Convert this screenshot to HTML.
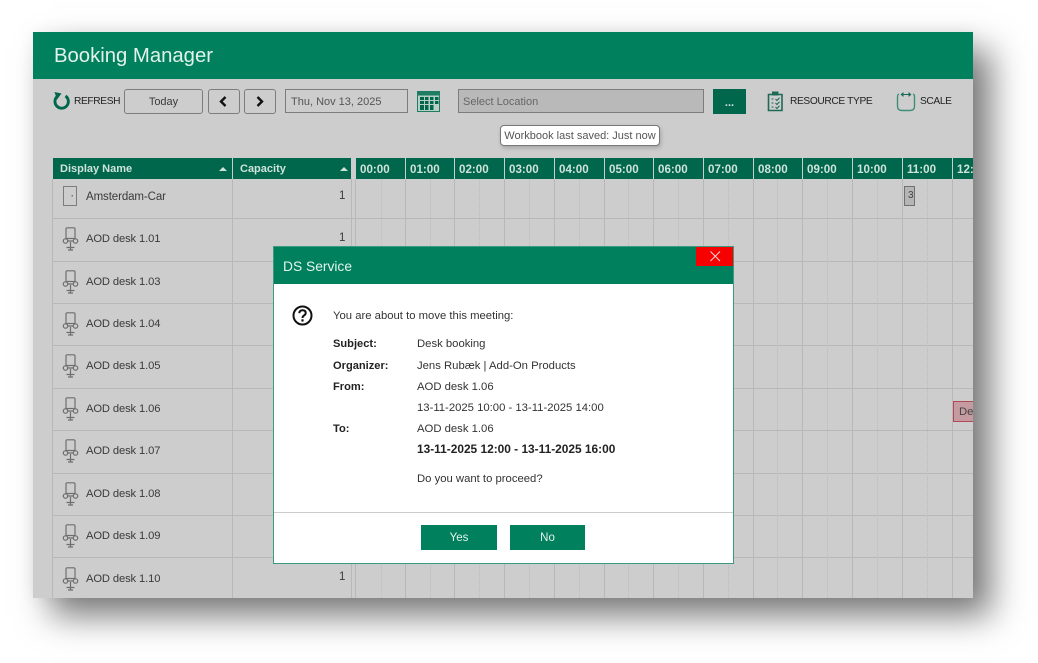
<!DOCTYPE html>
<html><head><meta charset="utf-8"><style>
html,body{margin:0;padding:0;background:#fff}
body{width:1038px;height:663px;overflow:hidden;position:relative;font-family:"Liberation Sans",sans-serif;font-size:11.3px;color:#333}
#app{position:absolute;left:33px;top:32px;width:940px;height:566px;background:#cdcdcd;box-shadow:18px 18px 32px rgba(0,0,0,.52),0 0 16px rgba(0,0,0,.05)}
.t{position:absolute;white-space:nowrap;line-height:14px}
.tb{font-size:10.2px;letter-spacing:-.36px;color:#222}
.b{position:absolute;box-sizing:border-box;border:1px solid #7d7d7d;border-radius:3px;text-align:center;color:#3a3a3a;font-size:11px}
.h{position:absolute;top:126px;height:21px;background:#00664c;color:#cfe3da;font-weight:bold;line-height:23px;font-size:11.6px;box-sizing:border-box;padding-left:4px;overflow:hidden;white-space:nowrap}
.n{position:absolute;left:53px;white-space:nowrap;color:#3a3a3a;line-height:16px;font-size:11.2px;letter-spacing:-.12px}
.c{position:absolute;left:306px;color:#3a3a3a;line-height:16px;font-size:11.5px}
.i{position:absolute;left:29px}
.d{position:absolute;white-space:nowrap;color:#333;line-height:14px;font-size:11.3px}
.l{left:59px;font-weight:bold;color:#222;font-size:11.1px}
.v{left:143px}
</style></head><body>
<div id="app">
<div style="position:absolute;left:0;top:0;width:940px;height:47px;background:#00805d"></div>
<div class="t" style="left:21px;top:11px;font-size:20.3px;line-height:27px;color:#e3f2ec">Booking Manager</div>

<svg style="position:absolute;left:19px;top:58px" width="20" height="22" viewBox="0 0 20 22"><path d="M5.200 6.500A6.700 6.700 0 1 0 13.500 6" fill="none" stroke="#00664c" stroke-width="2.900"/><path d="M2.500 2L9.500 3.500L5 9.500Z" fill="#00664c"/></svg>
<div class="t tb" style="left:41px;top:63px">REFRESH</div>
<div class="b" style="left:91px;top:57px;width:79px;height:25px;line-height:25px">Today</div>
<div class="b" style="left:175px;top:57px;width:32px;height:25px"></div>
<svg style="position:absolute;left:186px;top:64px" width="9" height="11"><path d="M6.500 1L2 5.500L6.500 10" fill="none" stroke="#111" stroke-width="2.400"/></svg>
<div class="b" style="left:211px;top:57px;width:32px;height:25px"></div>
<svg style="position:absolute;left:222px;top:64px" width="9" height="11"><path d="M2.500 1L7 5.500L2.500 10" fill="none" stroke="#111" stroke-width="2.400"/></svg>
<div class="b" style="left:252px;top:57px;width:123px;height:24px;border-radius:0;text-align:left;padding-left:5px;line-height:24px;color:#555">Thu, Nov 13, 2025</div>
<svg style="position:absolute;left:384px;top:59px" width="24" height="21"><rect x=".5" y=".5" width="22" height="20" fill="#b9cfc6" stroke="#1e7d62"/><rect x=".5" y=".5" width="22" height="4" fill="#1e7d62"/><path d="M3 6h4v3H3zM8 6h3.500v3H8zM13 6h3.500v3H13zM18 6h3.500v3H18zM3 10h4v3H3zM8 10h3.500v3H8zM13 10h3.500v3H13zM18 10h3.500v3H18zM8 14h3.500v5H8zM13 14h3.500v5H13zM3 14h4v5H3z" fill="#00664c"/></svg>
<div class="b" style="left:425px;top:57px;width:246px;height:24px;border-radius:0;background:#b9b9b9;text-align:left;padding-left:4px;line-height:24px;color:#666">Select Location</div>
<div style="position:absolute;left:680px;top:57px;width:33px;height:25px;background:#00664c;color:#d5e5de;text-align:center;line-height:28px;font-size:11px;font-weight:bold">...</div>

<svg style="position:absolute;left:734px;top:59px" width="18" height="22"><path d="M1.500 3.500h13.500v16H1.500z" fill="none" stroke="#1e6b55" stroke-width="1.600"/><rect x="5" y=".5" width="6.500" height="4" fill="#1e6b55"/><path d="M4.500 8h2M4.500 12h2M4.500 16h2M8.500 8l1.500 1.500L12.500 6.800M8.500 12l1.500 1.500L12.500 10.800M8.500 16l1.500 1.500L12.500 14.800" fill="none" stroke="#1e6b55" stroke-width="1.100"/></svg>
<div class="t tb" style="left:757px;top:63px">RESOURCE TYPE</div>
<svg style="position:absolute;left:863px;top:58px" width="20" height="22"><path d="M3 4Q1.500 4.500 1.500 7V16Q1.500 20.500 6 20.500H14Q18.500 20.500 18.500 16V6.500Q18.500 4.500 17 4" fill="none" stroke="#3f8f78" stroke-width="1.400"/><path d="M5.500 4.500h9" stroke="#1e6b55" stroke-width="1"/><path d="M4.500 4.500l3-2.500v5zM15.500 4.500l-3-2.500v5z" fill="#1e6b55"/></svg>
<div class="t tb" style="left:887px;top:63px">SCALE</div>

<div class="t" style="left:467px;top:93px;width:160px;height:21px;box-sizing:border-box;background:#fff;border:1px solid #777;border-radius:4px;text-align:center;line-height:21px;font-size:11px;color:#555;box-shadow:1px 2px 4px rgba(0,0,0,.2)">Workbook last saved: Just now</div>

<svg style="position:absolute;left:0;top:0" width="940" height="566">
<g stroke="#b8b8b8" stroke-width="1" fill="none">
<path d="M19.500 147V566M199.500 147V566M318.500 147V566M322.500 147V566"/>
<path d="M372.500 147V566M421.500 147V566M471.500 147V566M521.500 147V566M571.500 147V566M620.500 147V566M670.500 147V566M720.500 147V566M769.500 147V566M819.500 147V566M869.500 147V566M919.500 147V566"/>
<path d="M20 186.500H940M20 229.500H940M20 271.500H940M20 313.500H940M20 356.500H940M20 398.500H940M20 441.500H940M20 483.500H940M20 525.500H940"/>
<path d="M348.500 147V566M397.500 147V566M446.500 147V566M496.500 147V566M546.500 147V566M595.500 147V566M645.500 147V566M695.500 147V566M744.500 147V566M794.500 147V566M844.500 147V566M894.500 147V566" stroke-dasharray="1 1" stroke="#bcbcbc"/>
</g></svg>

<div class="h" style="left:20px;width:179px;padding-left:7px;font-size:11px">Display Name</div>
<div class="h" style="left:200px;width:118px;padding-left:7px;font-size:11px">Capacity</div>
<svg style="position:absolute;left:186px;top:135px" width="8" height="4"><path d="M0 4L4 0L8 4Z" fill="#cfe3da"/></svg>
<svg style="position:absolute;left:307px;top:135px" width="8" height="4"><path d="M0 4L4 0L8 4Z" fill="#cfe3da"/></svg>
<div class="h" style="left:323px;width:49px">00:00</div>
<div class="h" style="left:373px;width:48px">01:00</div>
<div class="h" style="left:422px;width:49px">02:00</div>
<div class="h" style="left:472px;width:49px">03:00</div>
<div class="h" style="left:522px;width:49px">04:00</div>
<div class="h" style="left:572px;width:48px">05:00</div>
<div class="h" style="left:621px;width:49px">06:00</div>
<div class="h" style="left:671px;width:49px">07:00</div>
<div class="h" style="left:721px;width:48px">08:00</div>
<div class="h" style="left:770px;width:49px">09:00</div>
<div class="h" style="left:820px;width:49px">10:00</div>
<div class="h" style="left:870px;width:49px">11:00</div>
<div class="h" style="left:920px;width:20px">12:00</div>

<svg class="i" style="top:154px;left:30px" width="15" height="21"><rect x=".5" y=".5" width="13" height="19" fill="none" stroke="#7d7d7d" stroke-width="1"/><rect x="8.500" y="9" width="1.500" height="1.500" fill="#777"/></svg>
<svg width="0" height="0" style="position:absolute"><defs><g id="ch" fill="none" stroke="#6e6e6e" stroke-width="1.200"><path d="M4 11.500V2Q4 .8 5.200 .8H11.800Q13 .8 13 2V11.500"/><path d="M3.500 11.500H13.500"/><circle cx="3.500" cy="14" r="2.200"/><circle cx="13.500" cy="14" r="2.200"/><path d="M5.700 14H11.300M8.500 15V23M4.500 20.500H12.500M6 23H11"/></g></defs></svg>
<svg class="i" style="top:195px" width="18" height="24"><use href="#ch"/></svg>
<svg class="i" style="top:238px" width="18" height="24"><use href="#ch"/></svg>
<svg class="i" style="top:280px" width="18" height="24"><use href="#ch"/></svg>
<svg class="i" style="top:322px" width="18" height="24"><use href="#ch"/></svg>
<svg class="i" style="top:365px" width="18" height="24"><use href="#ch"/></svg>
<svg class="i" style="top:407px" width="18" height="24"><use href="#ch"/></svg>
<svg class="i" style="top:450px" width="18" height="24"><use href="#ch"/></svg>
<svg class="i" style="top:492px" width="18" height="24"><use href="#ch"/></svg>
<svg class="i" style="top:535px" width="18" height="24"><use href="#ch"/></svg>

<div class="n" style="top:157px;font-size:11.5px;letter-spacing:-.1px">Amsterdam-Car</div>
<div class="n" style="top:199px">AOD desk 1.01</div>
<div class="n" style="top:242px">AOD desk 1.03</div>
<div class="n" style="top:284px">AOD desk 1.04</div>
<div class="n" style="top:326px">AOD desk 1.05</div>
<div class="n" style="top:369px">AOD desk 1.06</div>
<div class="n" style="top:411px">AOD desk 1.07</div>
<div class="n" style="top:454px">AOD desk 1.08</div>
<div class="n" style="top:496px">AOD desk 1.09</div>
<div class="n" style="top:539px">AOD desk 1.10</div>
<div class="c" style="top:156px">1</div>
<div class="c" style="top:198px">1</div>
<div class="c" style="top:537px">1</div>

<div style="position:absolute;left:871px;top:154px;width:11px;height:20px;box-sizing:border-box;background:#b5b5b5;border:1px solid #707070;overflow:hidden;font-size:10px;line-height:18px;padding-left:3px;color:#444">3</div>
<div style="position:absolute;left:920px;top:369px;width:20px;height:21px;box-sizing:border-box;background:#c59aa0;border:1px solid #b04a55;border-right:0;overflow:hidden;line-height:20px;padding-left:5px;color:#444;white-space:nowrap">Desk</div>
</div>

<div style="position:absolute;left:273px;top:246px;width:461px;height:318px;box-sizing:border-box;background:#fff;border:1px solid #3b9a80;overflow:hidden">
<div style="position:absolute;left:-1px;top:-1px;width:461px;height:38px;background:#00805d"></div>
<div class="t" style="left:9px;top:10px;font-size:13.8px;line-height:20px;color:#e6f3ee">DS Service</div>
<div style="position:absolute;left:422px;top:-1px;width:38px;height:20px;background:#f60000"></div>
<svg style="position:absolute;left:436px;top:4px" width="11" height="11"><path d="M.5 .5L10 10M10 .5L.5 10" stroke="#ffd6d6" stroke-width="1"/></svg>
<svg style="position:absolute;left:18px;top:58px" width="21" height="21"><circle cx="10.500" cy="10.500" r="9" fill="none" stroke="#111" stroke-width="2"/><path d="M7.300 8.200Q7.500 5.300 10.500 5.300Q13.700 5.300 13.700 8Q13.700 9.500 12 10.500Q10.500 11.400 10.500 13" fill="none" stroke="#111" stroke-width="2"/><rect x="9.400" y="14.300" width="2.200" height="2.200" fill="#111"/></svg>
<div class="d" style="left:59px;top:62px">You are about to move this meeting:</div>
<div class="d l" style="top:90px">Subject:</div><div class="d v" style="top:90px">Desk booking</div>
<div class="d l" style="top:112px">Organizer:</div><div class="d v" style="top:112px">Jens Rubæk | Add-On Products</div>
<div class="d l" style="top:133px">From:</div><div class="d v" style="top:133px">AOD desk 1.06</div>
<div class="d v" style="top:154px">13-11-2025 10:00 - 13-11-2025 14:00</div>
<div class="d l" style="top:175px">To:</div><div class="d v" style="top:175px">AOD desk 1.06</div>
<div class="d v" style="top:195px;font-weight:bold;color:#222;font-size:11.9px">13-11-2025 12:00 - 13-11-2025 16:00</div>
<div class="d v" style="top:225px">Do you want to proceed?</div>
<div style="position:absolute;left:0;top:265px;width:459px;height:1px;background:#ccc"></div>
<div style="position:absolute;left:147px;top:278px;width:76px;height:25px;background:#00805d;color:#e6f3ee;text-align:center;line-height:27px;font-size:11.5px">Yes</div>
<div style="position:absolute;left:236px;top:278px;width:75px;height:25px;background:#00805d;color:#e6f3ee;text-align:center;line-height:27px;font-size:11.5px">No</div>
</div>
</body></html>
